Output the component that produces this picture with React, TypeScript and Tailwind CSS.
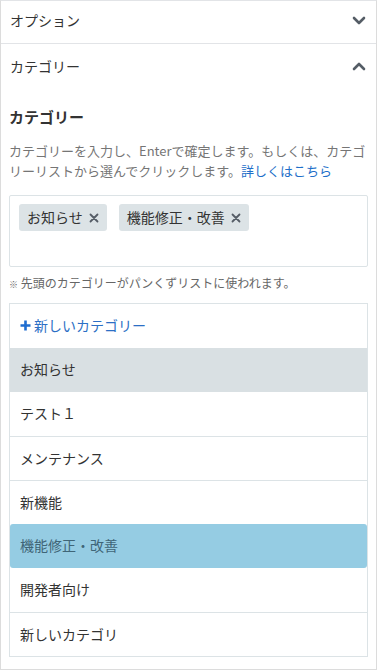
import React from "react";

const font = { fontFamily: '"Noto Sans CJK JP", "Noto Sans", sans-serif' };

function Chevron({ up }: { up?: boolean }) {
  return (
    <svg width="14" height="10" viewBox="0 0 14 10" className="text-[#555d66]">
      <polyline
        points={up ? "2,8 7,3 12,8" : "2,2 7,7 12,2"}
        fill="none"
        stroke="currentColor"
        strokeWidth="2.6"
        strokeLinecap="round"
        strokeLinejoin="round"
      />
    </svg>
  );
}

function Tag({ label }: { label: string }) {
  return (
    <div className="flex items-center gap-[6px] h-[27px] px-[8px] rounded-[3px] bg-[#dce3e6] text-[14px] text-[#333]">
      <span>{label}</span>
      <svg width="10" height="10" viewBox="0 0 10 10">
        <path d="M1.5 1.5 L8.5 8.5 M8.5 1.5 L1.5 8.5" stroke="#555d66" strokeWidth="1.8" strokeLinecap="round" />
      </svg>
    </div>
  );
}

const items = [
  { label: "お知らせ", state: "checked" },
  { label: "テスト１", state: "" },
  { label: "メンテナンス", state: "" },
  { label: "新機能", state: "" },
  { label: "機能修正・改善", state: "active" },
  { label: "開発者向け", state: "" },
  { label: "新しいカテゴリ", state: "" },
];

export default function App() {
  return (
    <div style={font} className="w-[377px] h-[671px] bg-white text-[#333]">
      <div className="h-[670px] border border-[#dcdcdc] border-t-[#e2e4e7]">
        <div className="flex items-center justify-between h-[43px] pl-[9px] pr-[10px] pb-[3px] border-b border-[#e2e4e7] text-[14px]">
          <span>オプション</span>
          <Chevron />
        </div>
        <div className="flex items-center justify-between h-[44px] pl-[9px] pr-[10px] text-[14px]">
          <span>カテゴリー</span>
          <Chevron up />
        </div>
        <div className="px-[8px] pt-[18px]">
          <h3 className="text-[15px] font-bold leading-[22px] text-[#333]">カテゴリー</h3>
          <p className="mt-[13px] text-[13px] leading-[20px] text-[#757575]">
            カテゴリーを入力し、Enterで確定します。もしくは、カテゴリーリストから選んでクリックします。
            <span className="text-[#1e6fc9]">詳しくはこちら</span>
          </p>
          <div className="mt-[14px] h-[72px] border border-[#dce3e6] rounded-[2px] pl-[9px] pt-[8px] flex items-start gap-[12px]">
            <Tag label="お知らせ" />
            <Tag label="機能修正・改善" />
          </div>
          <p className="mt-[6px] text-[12px] leading-[20px] text-[#666]">
            <span className="text-[9px] align-middle">※</span> 先頭のカテゴリーがパンくずリストに使われます。
          </p>
          <div className="mt-[8px] border border-[#dce3e6]">
            <div className="flex items-center gap-[3px] h-[44px] pl-[10px] text-[14px] text-[#2c6fc5]">
              <svg width="11" height="11" viewBox="0 0 11 11">
                <path d="M5.5 0.5 V10.5 M0.5 5.5 H10.5" stroke="#1f6dd0" strokeWidth="2.6" />
              </svg>
              <span>新しいカテゴリー</span>
            </div>
            {items.map((it, i) => (
              <div
                key={it.label}
                className={
                  it.state === "checked"
                    ? "flex items-center h-[44px] pl-[10px] text-[14px] bg-[#d9e0e3] text-[#333]"
                    : it.state === "active"
                      ? "flex items-center h-[44px] pl-[10px] text-[14px] bg-[#95cce3] text-[#3f6577] rounded-[3px]"
                      : i > 0 && items[i - 1].state === ""
                        ? "flex items-center h-[44px] pl-[10px] text-[14px] border-t border-[#dce3e6] text-[#333]"
                        : "flex items-center h-[44px] pl-[10px] text-[14px] text-[#333]"
                }
              >
                {it.label}
              </div>
            ))}
          </div>
        </div>
      </div>
    </div>
  );
}
